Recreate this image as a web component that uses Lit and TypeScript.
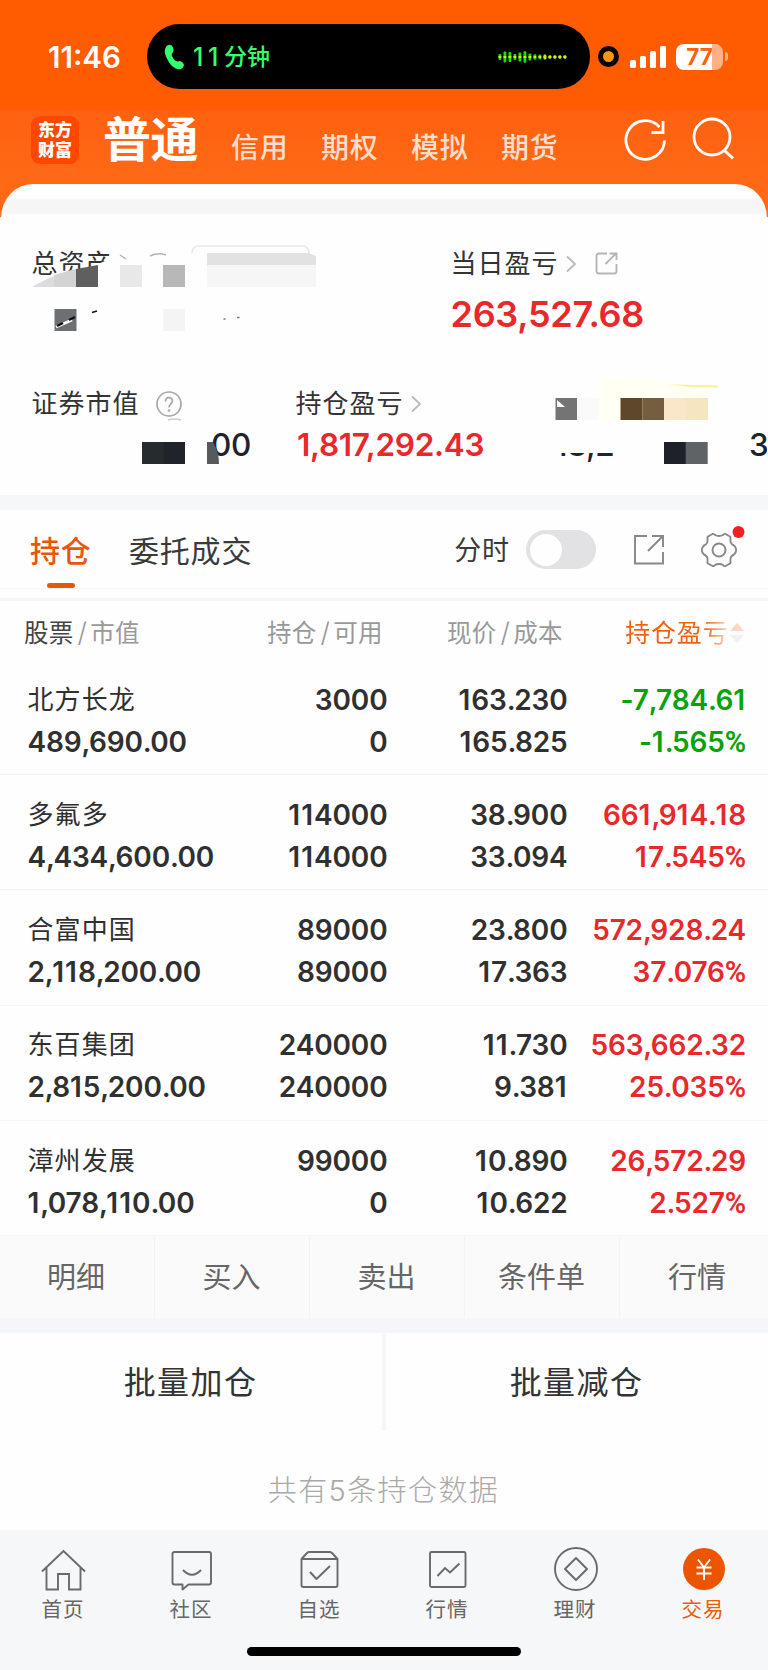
import { LitElement, html, css, svg } from "lit";
import { customElement } from "lit/decorators.js";

interface Holding {
  name: string;
  value: string;
  qty: string;
  avail: string;
  price: string;
  cost: string;
  pnl: string;
  pct: string;
}

const HOLDINGS: Holding[] = [
  { name: "北方长龙", value: "489,690.00", qty: "3000", avail: "0", price: "163.230", cost: "165.825", pnl: "-7,784.61", pct: "-1.565" },
  { name: "多氟多", value: "4,434,600.00", qty: "114000", avail: "114000", price: "38.900", cost: "33.094", pnl: "661,914.18", pct: "17.545" },
  { name: "合富中国", value: "2,118,200.00", qty: "89000", avail: "89000", price: "23.800", cost: "17.363", pnl: "572,928.24", pct: "37.076" },
  { name: "东百集团", value: "2,815,200.00", qty: "240000", avail: "240000", price: "11.730", cost: "9.381", pnl: "563,662.32", pct: "25.035" },
  { name: "漳州发展", value: "1,078,110.00", qty: "99000", avail: "0", price: "10.890", cost: "10.622", pnl: "26,572.29", pct: "2.527" },
];

const WAVE = [6, 11, 10, 6, 9, 11.5, 7, 5.5, 5, 5, 3.5, 3.5, 3.5, 3.5];

const base = css`
  :host { display: block; font-family: Inter, "Noto Sans CJK SC", sans-serif; }
  * { box-sizing: border-box; }
  svg { display: block; flex: none; }
`;

@customElement("status-bar")
class StatusBar extends LitElement {
  static styles = [base, css`
    .bar { display: flex; align-items: center; height: 110px; padding: 3px 0 0 48px; color: #fff; }
    .time { width: 99px; font-size: 29.5px; font-weight: 600; letter-spacing: 0; line-height: 64px; }
    .island { display: flex; align-items: center; width: 443px; height: 65px; border-radius: 33px; background: #000; padding: 0 22px 0 17px; }
    .call { display: flex; flex: 1; align-items: center; margin-left: 8px; color: #35ff70; font-size: 23px; line-height: 30px; font-weight: 500; }
    .mins { width: 31px; font-size: 25px; letter-spacing: 4.500px; }
    .dot { width: 21px; height: 21px; border: 5.5px solid #000; border-radius: 50%; background: #ff9500; margin-left: 8px; }
    .signal { margin-left: 11px; }
    .battery { display: flex; align-items: center; justify-content: center; width: 47px; height: 26px; margin-left: 10px; border-radius: 8px;
      background: linear-gradient(90deg, #fff 36px, #ffb184 36px); color: #ff5f08; font-size: 22.5px; font-weight: 700; line-height: 26px; }
    .nub { width: 3px; height: 9px; margin-left: 2px; border-radius: 0 4px 4px 0; background: #ffb184; }
  `];
  render() {
    return html`<div class="bar">
      <div class="time">11:46</div>
      <div class="island">
        <svg width="21" height="28" viewBox="0 0 21 28"><path fill="#35ff70" d="M1.500 5C3 1.500 6.500 1 8 3C9.500 5 10 7.500 9 9C7.500 10.500 7 12 8.500 14C10 17 12 18.500 14 18.500C16 17 18.500 19 19.700 21C20.500 23 18.500 26 15.500 26.300C11 26.500 6 22 3.500 16.500C1.200 12 0 8 1.500 5Z"/></svg>
        <div class="call"><span class="mins">11</span><span>分钟</span></div>
        <svg width="70" height="14" viewBox="0 0 70 14">${WAVE.map((h, i) => svg`
          <rect x=${i * 5 + 0.5} y=${7 - h / 2} width="2.800" height=${h} rx="1" fill=${i > 8 ? "#b8f000" : "#19e000"}/>
          <rect x=${i * 5 + 0.5} y="6" width="2.800" height="2" fill="#d8f000"/>`)}</svg>
      </div>
      <div class="dot"></div>
      <svg class="signal" width="36" height="22" viewBox="0 0 36 22" fill="#fff">
        <rect x="0" y="14" width="6" height="8" rx="1.500"/><rect x="10" y="10" width="6" height="12" rx="1.500"/>
        <rect x="20" y="5" width="6" height="17" rx="1.500"/><rect x="30" y="0" width="6" height="22" rx="1.500"/>
      </svg>
      <div class="battery">77</div><div class="nub"></div>
    </div>`;
  }
}

@customElement("account-header")
class AccountHeader extends LitElement {
  static styles = [base, css`
    .head { display: flex; height: 107px; padding-left: 31px; color: #fff; background: linear-gradient(#ff6110, #ff6814 60%, #ff6b19); }
    .logo { width: 48px; height: 48px; margin-top: 6px; padding-top: 4px; border-radius: 9px; background: #ff4700; font-size: 17px; line-height: 20px; font-weight: 900; text-align: center; }
    .main { width: 128px; margin: 4.500px 0 0 24px; font-size: 48px; line-height: 50px; font-weight: 700; letter-spacing: -0.5px; }
    .tab { width: 90px; margin-top: 17.500px; font-size: 28px; line-height: 40px; font-weight: 500; letter-spacing: 0.8px; color: #ffddcb; white-space: nowrap; }
    .icons { margin: 5px 0 0 31px; }
  `];
  render() {
    return html`<div class="head">
      <div class="logo">东方<br>财富</div>
      <div class="main">普通</div>
      ${["信用", "期权", "模拟", "期货"].map((t) => html`<div class="tab">${t}</div>`)}
      <svg class="icons" width="115" height="50" viewBox="622 115 115 50" fill="none" stroke="#fff" stroke-width="2.800">
        <path d="M664.500 140.500A19.300 19.300 0 1 1 659.500 127"/><path d="M663 121V132.500H651.500"/>
        <circle cx="712" cy="137" r="18"/><path d="M724.500 150.500L733 158.500"/>
      </svg>
    </div>`;
  }
}

@customElement("asset-summary")
class AssetSummary extends LitElement {
  static styles = [base, css`
    .card { position: relative; height: 311px; margin: -33px 1px 0; border-radius: 32px 32px 0 0 / 34px 34px 0 0; overflow: hidden;
      background: linear-gradient(#fefefe 14px, #f6f6f6 16px, #f6f6f6 29px, #fefefe 31px); }
    .row { display: grid; }
    .top { grid-template-columns: 419px 1fr; padding: 61.500px 0 0 30.5px; height: 163px; }
    .bottom { grid-template-columns: 264px 259px 1fr; padding: 39px 0 0 30.5px; }
    .label { display: flex; align-items: center; height: 36px; font-size: 26px; letter-spacing: 1px; line-height: 36px; color: #333; }
    .label svg { margin-left: 6px; }
    .label .share { margin-left: 18px; }
    .label .help { margin-left: 16px; }
    .big { margin-top: 9px; font-size: 36px; font-weight: 600; line-height: 46px; letter-spacing: -0.3px; color: #e8282a; }
    .num { height: 40px; margin-top: 3px; font-size: 31.5px; font-weight: 600; line-height: 40px; letter-spacing: -0.3px; color: #e8282a; white-space: nowrap; }
    .pos { padding-left: 1.500px; }
    .dark { color: #20232a; font-weight: 500; }
    .tail { padding-left: 179.500px; }
    .right { display: flex; justify-content: space-between; padding: 36px 0 0 0; }
    .last { margin-right: -1.500px; }
    .mosaic { position: absolute; left: -1px; top: 30px; }
  `];
  render() {
    const chev = html`<svg width="12" height="18" viewBox="0 0 12 18" fill="none" stroke="#bbb" stroke-width="1.800"><path d="M2 1.500L10 9L2 16.500"/></svg>`;
    return html`<div class="card">
      <div class="row top">
        <div class="label">总资产</div>
        <div>
          <div class="label">当日盈亏${chev}
            <svg class="share" width="23" height="23" viewBox="0 0 23 23" fill="none" stroke="#b5b5b5" stroke-width="1.900"><path d="M12 1.500H4Q1.500 1.500 1.500 4V19Q1.500 21.500 4 21.500H19Q21.500 21.500 21.500 19V12M10.500 12L20.500 2M14.500 1.500H21.500V8"/></svg>
          </div>
          <div class="big">263,527.68</div>
        </div>
      </div>
      <div class="row bottom">
        <div>
          <div class="label">证券市值
            <svg class="help" width="26" height="26" viewBox="0 0 26 26" fill="none" stroke="#a8a8a8" stroke-width="1.700"><circle cx="13" cy="13" r="12"/><path d="M9.500 10.500C9.500 5.500 16.500 5.500 16.500 10C16.500 12.500 13 13 13 16.500"/><circle cx="13" cy="19.500" r=".5"/></svg>
          </div>
          <div class="num dark tail">00</div>
        </div>
        <div><div class="label">持仓盈亏${chev}</div><div class="num pos">1,817,292.43</div></div>
        <div class="right"><div class="num dark">18,2</div><div class="num dark last">3</div></div>
      </div>
      <svg class="mosaic" width="768" height="270" viewBox="0 214 768 270">
        <path fill="#fefefe" d="M545 425H630V455L613 453H545Z"/>
        <path fill="#fefefe" d="M98 264L112 258V290H98Z"/>
        <path fill="#dcdcdc" d="M32 287C45 279 60 273 76 269V287Z"/><path fill="#d3d3d3" d="M54 275L76 269V287H54Z"/>
        <path fill="#5f5f5f" d="M76 269L98 265V287H76Z"/>
        <rect x="120" y="265" width="22" height="22" fill="#e8e8e8"/><rect x="163" y="265" width="22" height="22" fill="#b8b8b8"/>
        <path fill="none" stroke="#e8e8e8" stroke-width="1.500" d="M192 253Q192 246 199 246H302Q309 246 309 254"/>
        <path fill="#e2e2e2" d="M207 253H308L316 256V266H207Z"/><rect x="207" y="265" width="109" height="22" fill="#f6f6f6"/>
        <path stroke="#b5b5b5" stroke-width="1.500" fill="none" d="M120 255L126 259M150 256Q158 252 166 255"/>
        <rect x="54.500" y="309" width="22" height="22" fill="#6c7073"/>
        <path stroke="#fff" stroke-width="3" fill="none" d="M56 327L72 320"/><path stroke="#111" stroke-width="2.500" fill="none" d="M57 326L63 323M69 320L75 317"/><path stroke="#111" stroke-width="1.600" d="M92 312.500L97 311"/>
        <rect x="163" y="309" width="22" height="22" fill="#f4f4f4"/>
        <path stroke="#777" stroke-width="1.300" d="M223.500 319H225.500M237 317.500H239.500"/>
        <path stroke="#ccc" stroke-width="1.500" fill="none" d="M168 420Q175 418 181 420"/>
        <rect x="142" y="442" width="22" height="22" fill="#262b2d"/><rect x="163.500" y="442" width="21.500" height="22" fill="#20232a"/>
        <path fill="#575a5d" d="M207 442H213Q219 452 219 464H207Z"/>
        <path fill="#fffff3" d="M599 378H640L708 387V420H599Z"/>
        <rect x="555.500" y="398" width="21.500" height="22" fill="#747474"/><path fill="#fff" d="M557 400L565 407H557Z"/>
        <rect x="577" y="398" width="22" height="22" fill="#fafafa"/>
        <rect x="620.500" y="398" width="22" height="22" fill="#5f472b"/><rect x="642.500" y="398" width="21.500" height="22" fill="#755e3f"/>
        <rect x="664" y="398" width="22" height="22" fill="#fae7c9"/><rect x="686" y="398" width="22" height="22" fill="#f6e6bf"/>
        <path fill="#fff095" d="M668 384.500L718 385.500V387.500L690 387Z"/>
        <rect x="664" y="442" width="22" height="22" fill="#1e2127"/><rect x="685.700" y="442" width="22" height="22" fill="#606366"/>
      </svg>
    </div>`;
  }
}

@customElement("holdings-panel")
class HoldingsPanel extends LitElement {
  static styles = [base, css`
    .band { height: 15px; background: #f5f7f9; }
    .tabs { display: flex; height: 79px; border-bottom: 1px solid #f5f5f5; color: #3a3a3a; }
    .tab { margin: 18.500px 0 0 37px; font-size: 30px; line-height: 44px; letter-spacing: 0.8px; white-space: nowrap; }
    .on { width: 62px; margin-left: 30px; color: #e6570d; font-weight: 500; }
    .on::after { content: ""; display: block; width: 28px; height: 5.500px; margin: 10px 0 0 17px; border-radius: 3px; background: #e6570d; }
    .fen { margin: 19px 0 0 auto; font-size: 27px; line-height: 44px; letter-spacing: 0.9px; }
    .toggle { width: 70px; height: 39px; margin: 20px 0 0 16px; padding: 3.500px; border-radius: 20px; background: #e2e2e4; }
    .knob { width: 32px; height: 32px; border-radius: 50%; background: #fefefe; }
    .tools { margin: 10px 20px 0 34px; }
    .thin { height: 12px; border-bottom: 3px solid #f4f6f9; }
    .cols { display: grid; grid-template-columns: 243px 180px 179px 1fr; height: 59px; padding: 12px 0 0 24px; font-size: 24.500px; line-height: 40px; color: #999; white-space: nowrap; letter-spacing: 0.3px; }
    .cols i { font-style: normal; margin: 0 3px 0 4px; font-size: 27px; font-weight: 300; }
    .cols b { font-weight: 400; color: #444; }
    .sort { display: flex; align-items: center; height: 40px; font-size: 25px; letter-spacing: 0.9px; margin-left: -1px; }
    .sort span { background: linear-gradient(90deg, #f0600f 75%, #fbe0d2 101%); background-clip: text; -webkit-background-clip: text; color: transparent; }
    .row { display: grid; grid-template-columns: 220px 140px 180px 178.500px; height: 115.200px; padding: 18.800px 0 0 27.500px; border-bottom: 1.500px solid #f5f5f5;
      font-size: 28px; font-weight: 600; line-height: 42px; letter-spacing: -0.150px; text-align: right; color: #303030; white-space: nowrap; }
    .left { text-align: left; }
    .name { font-size: 26px; font-weight: 400; letter-spacing: 1.100px; }
    .up { color: #e8282a; }
    .down { color: #08a308; }
    .p { letter-spacing: -1.500px; }
    .o { letter-spacing: 1px; }
    .pc { font-family: Roboto, sans-serif; font-size: 29px; line-height: 1; }
  `];
  render() {
    const head = (a: string, b: string) => html`<div>${a}<i>/</i>${b}</div>`;
    const num = (s: string) => s.split(/([.,]|1)/).filter(Boolean).map((c) =>
      c === "1" ? html`<span class="o">1</span>` : c === "." || c === "," ? html`<span class="p">${c}</span>` : c);
    return html`
      <div class="band"></div>
      <div class="tabs">
        <div class="tab on">持仓</div><div class="tab">委托成交</div>
        <div class="fen">分时</div>
        <div class="toggle"><div class="knob"></div></div>
        <svg class="tools" width="118" height="52" viewBox="630 520 118 52" fill="none" stroke="#888" stroke-width="1.900">
          <path d="M647 536H635V563.500H663V552M663 547V536H652M648 551L662 537"/>
          <path stroke-linejoin="round" d="M712.500 534Q714 533.500 715 535Q716.500 536 719 536T723 535Q724 533.500 725.500 534L730 536.500Q731 537.500 730.500 539C730 542 731.500 544.500 734 545.500Q736.200 547.500 736.200 550T734 554.500C731.500 555.500 730 558 730.500 561Q731 562.500 730 563.500L725.500 566Q724 566.500 723 565Q721.500 564 719 564T715 565Q714 566.500 712.500 566L708 563.500Q707 562.500 707.500 561C708 558 706.500 555.500 704 554.500Q701.800 552.500 701.800 550T704 545.500C706.500 544.500 708 542 707.500 539Q707 537.500 708 536.500Z"/>
          <circle cx="719" cy="550" r="6.500"/><circle cx="738.500" cy="532" r="6" fill="#ee2020" stroke="none"/>
        </svg>
      </div>
      <div class="thin"></div>
      <div class="cols">
        <div><b>股票</b><i>/</i>市值</div>${head("持仓", "可用")}${head("现价", "成本")}
        <div class="sort"><span>持仓盈亏</span><svg width="16" height="22" viewBox="0 0 16 22"><path fill="#fad6c5" d="M8 1L15 9H1Z"/><path fill="#f1f1f1" d="M8 21L15 13H1Z"/></svg></div>
      </div>
      ${HOLDINGS.map((h) => html`<div class="row">
        <div class="left"><div class="name">${h.name}</div><div>${num(h.value)}</div></div>
        <div>${num(h.qty)}<br>${num(h.avail)}</div>
        <div>${num(h.price)}<br>${num(h.cost)}</div>
        <div class=${h.pnl.startsWith("-") ? "down" : "up"}>${num(h.pnl)}<br>${num(h.pct)}<span class="pc">%</span></div>
      </div>`)}`;
  }
}

@customElement("trade-actions")
class TradeActions extends LitElement {
  static styles = [base, css`
    .actions { display: grid; grid-template-columns: 154px repeat(3, 155px) 1fr; height: 82px; background: #fafafa; font-size: 29px; line-height: 84px; color: #666; text-align: center; }
    .actions div { border-left: 1.500px solid #f3f3f3; height: 82px; padding-right: 1px; }
    .actions div:first-child { border-left: 0; padding-right: 2px; }
    .actions div:last-child { padding: 0 0 0 6px; }
    .band { height: 15px; background: #f4f6f9; }
    .batch { display: grid; grid-template-columns: 382px 1fr; height: 98px; font-size: 32px; line-height: 100px; letter-spacing: 1.400px; text-align: center; color: #333; }
    .batch div { height: 98px; padding-right: 1px; }
    .batch div + div { border-left: 4px solid #f5f6f8; }
    .count { height: 99px; padding: 36.500px 1px 0 0; font-size: 29px; line-height: 48px; font-weight: 300; text-align: center; letter-spacing: 1.400px; color: #a9a9a9; }
  `];
  render() {
    return html`
      <div class="actions">${["明细", "买入", "卖出", "条件单", "行情"].map((t) => html`<div>${t}</div>`)}</div>
      <div class="band"></div>
      <div class="batch"><div>批量加仓</div><div>批量减仓</div></div>
      <div class="count">共有5条持仓数据</div>`;
  }
}

@customElement("tab-bar")
class TabBar extends LitElement {
  static styles = [base, css`
    .bar { height: 140px; padding-top: 17px; background: #f6f7f9; }
    .items { display: grid; grid-template-columns: repeat(6, 128px); height: 100px; }
    .item { display: flex; flex-direction: column; align-items: center; font-size: 20.500px; line-height: 32px; letter-spacing: 0.9px; color: #666; }
    .item svg { margin-bottom: 3px; }
    .label { padding-right: 2px; }
    .active { color: #ec5a0c; }
    .home { width: 274px; height: 9px; margin-left: 247px; border-radius: 5px; background: #000; }
  `];
  render() {
    const items = [
      { t: "首页", i: svg`<path d="M2 23.500L23.500 3L45 23.500M6.500 20V41.500H18V26H29V41.500H40.500V20"/>` },
      { t: "社区", i: svg`<path stroke-linejoin="round" d="M6.500 4H41Q43 4 43 6V34.500Q43 36.500 41 36.500H20.500L14.500 41.500V36.500H6.500Q4.500 36.500 4.500 34.500V6Q4.500 4 6.500 4ZM15 22Q24 31.500 33 22"/>` },
      { t: "自选", i: svg`<path stroke-linejoin="round" d="M5.500 11V37Q5.500 39 7.500 39H39.500Q41.500 39 41.500 37V11L36 5Q35 4 33.500 4H13.500Q12 4 11 5ZM5.500 11H41.500M14 24L20.500 31L34 18"/>` },
      { t: "行情", i: svg`<rect x="6" y="4" width="35.500" height="35" rx="1.500"/><path d="M13.500 28L21 20L26 24.500L35.500 15.500"/>` },
      { t: "理财", i: svg`<circle cx="24" cy="21" r="21"/><path stroke-linejoin="round" d="M24 10L35 21L24 32L13 21Z"/>` },
      { t: "交易", i: svg`<circle cx="24" cy="21" r="21" fill="#ec5500" stroke="none"/><path stroke="#fff" d="M18 11.500L24 19.500L30 11.500M24 19.500V32M16.500 19.500H31.500M16.500 25.500H31.500"/>` },
    ];
    return html`<div class="bar">
      <div class="items">${items.map((x, n) => html`<div class=${n === 5 ? "item active" : "item"}>
        <svg width="48" height="44" viewBox="0 -1 48 44" fill="none" stroke="#6a6a6a" stroke-width="1.900">${x.i}</svg>
        <div class="label">${x.t}</div></div>`)}</div>
      <div class="home"></div>
    </div>`;
  }
}

@customElement("app-root")
class AppRoot extends LitElement {
  static styles = [base, css`
    .page { width: 768px; height: 1670px; overflow: hidden; background: #fefefe; }
    .hero { background: #ff5b00; }
  `];
  render() {
    return html`<div class="page">
      <div class="hero"><status-bar></status-bar><account-header></account-header></div>
      <asset-summary></asset-summary>
      <holdings-panel></holdings-panel>
      <trade-actions></trade-actions>
      <tab-bar></tab-bar>
    </div>`;
  }
}
